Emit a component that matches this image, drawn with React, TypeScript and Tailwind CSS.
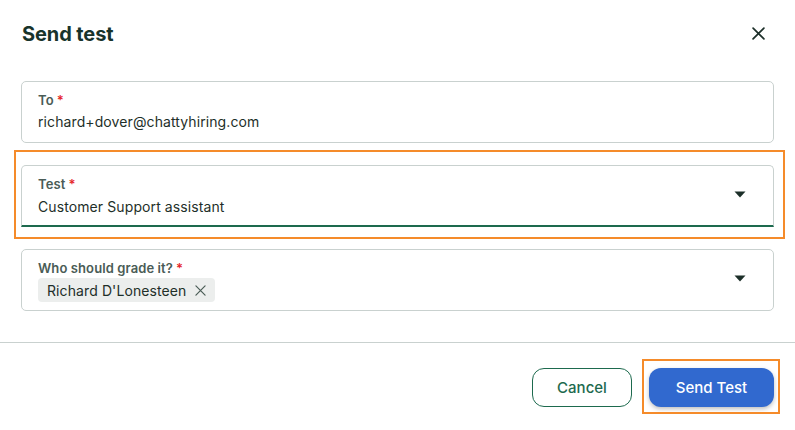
import { FC, ReactNode } from 'react';

const Caret = () => (
  <svg width="12" height="7" viewBox="0 0 12 7" className="shrink-0">
    <path d="M0.5 0.5h11L6 6.5z" fill="#1c2f29" />
  </svg>
);

const CloseIcon: FC<{ size?: number; stroke?: string; width?: number }> = ({
  size = 13,
  stroke = '#1c2f29',
  width = 1.6,
}) => (
  <svg width={size} height={size} viewBox="0 0 12 12">
    <path d="M1 1l10 10M11 1L1 11" stroke={stroke} strokeWidth={width} strokeLinecap="round" />
  </svg>
);

interface FieldProps {
  label: string;
  children: ReactNode;
  dropdown?: boolean;
  focused?: boolean;
}

const Field: FC<FieldProps> = ({ label, children, dropdown, focused }) => (
  <div
    className={
      focused
        ? 'flex h-[62px] items-start rounded-t-[5px] border border-b-2 border-[#c9d1cf] border-b-[#1d6a4e] pl-[16px] pr-[27px]'
        : 'flex h-[62px] items-start rounded-[5px] border border-[#c9d1cf] pl-[16px] pr-[27px]'
    }
  >
    <div className="flex min-w-0 flex-1 flex-col pt-[9px]">
      <div className="flex items-center gap-x-[3px] text-[13px] leading-[18px] font-semibold tracking-[0.1px] text-[#4a5c56]">
        {label}
        <span className="text-[#e5262b]">*</span>
      </div>
      {children}
    </div>
    {dropdown && (
      <div className="flex h-full items-center pb-[3px]">
        <Caret />
      </div>
    )}
  </div>
);

export default function App() {
  return (
    <div className="h-[430px] w-[795px] bg-white font-['Inter',sans-serif] text-[#1e2f29]">
      <div className="flex h-[67px] items-center justify-between pl-[22px] pr-[30px]">
        <h2 className="text-[20px] font-bold tracking-[-0.1px] text-[#18332b]">Send test</h2>
        <CloseIcon />
      </div>

      <div className="mt-[14px] flex flex-col gap-y-[22px] px-[21px]">
        <Field label="To">
          <p className="mt-[2px] text-[14px] leading-[22px] tracking-[0.1px]">richard+dover@chattyhiring.com</p>
        </Field>

        <div className="relative">
          <Field label="Test" dropdown focused>
            <p className="mt-[3px] text-[14px] leading-[22px] tracking-[0.1px]">Customer Support assistant</p>
          </Field>
          <div className="pointer-events-none absolute top-[-15px] right-[-11px] bottom-[-12px] left-[-7px] border-2 border-[#f58b2a]" />
        </div>

        <Field label="Who should grade it?" dropdown>
          <div className="mt-[1px] flex">
            <span className="flex h-[24px] items-center gap-x-[9px] rounded-[4px] bg-[#eceeed] pr-[9px] pl-[9px] text-[14px] tracking-[0.1px] text-[#1e2f29]">
              Richard D'Lonesteen
              <CloseIcon size={11} stroke="#4a5c56" width={1.3} />
            </span>
          </div>
        </Field>
      </div>

      <div className="mt-[31px] h-px w-full bg-[#c9d1cf]" />

      <div className="flex justify-end gap-x-[17px] px-[21px] pt-[25px]">
        <button className="h-[39px] w-[100px] rounded-[12px] border border-[#1d6a4e] pt-[2px] text-[15px] font-medium text-[#1d6a4e]">
          Cancel
        </button>
        <div className="relative">
          <button className="h-[39px] w-[125px] rounded-[12px] bg-[#3169cf] pt-[2px] text-[15px] font-medium text-white shadow-[0_2px_4px_rgba(0,0,0,0.25)]">
            Send Test
          </button>
          <div className="pointer-events-none absolute top-[-9px] right-[-6px] bottom-[-7px] left-[-7px] border-2 border-[#f58b2a]" />
        </div>
      </div>
    </div>
  );
}
